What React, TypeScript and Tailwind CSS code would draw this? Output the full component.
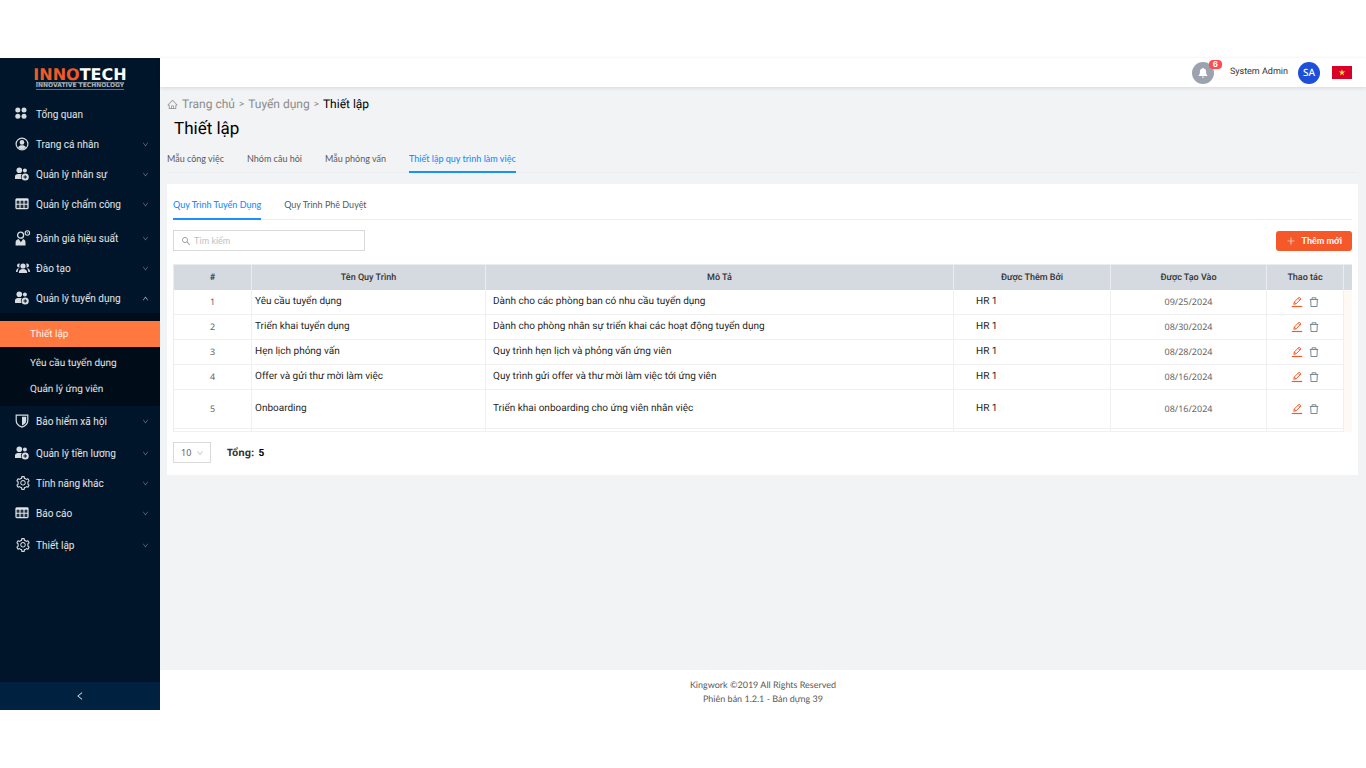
import type { ReactNode } from "react";
import clsx from "clsx";
import { AiOutlineDown, AiOutlineHome, AiOutlineLeft, AiOutlinePlus, AiOutlineSearch, AiOutlineSetting, AiOutlineUp } from "react-icons/ai";

function DotsIcon() {
  return (
    <svg viewBox="0 0 14 14" className="h-3.5 w-3.5" fill="currentColor" aria-hidden>
      <circle cx="2.8" cy="3" r="2.5" />
      <circle cx="9" cy="3" r="2.5" />
      <circle cx="2.8" cy="9.2" r="2.5" />
      <circle cx="9" cy="9.2" r="2.5" />
    </svg>
  );
}

function ProfileIcon() {
  return (
    <svg viewBox="0 0 14 14" className="h-3.5 w-3.5" fill="none" aria-hidden>
      <circle cx="7" cy="7" r="5.9" stroke="currentColor" strokeWidth="1.2" />
      <circle cx="7" cy="5.4" r="2.3" fill="currentColor" />
      <path d="M3 10.6C3.8 8.9 5.3 8.3 7 8.3s3.2.6 4 2.3C10 11.7 8.6 12.2 7 12.2S4 11.7 3 10.6z" fill="currentColor" />
    </svg>
  );
}

function PeoplePlusIcon() {
  return (
    <svg viewBox="0 0 14 14" className="h-3.5 w-3.5" fill="currentColor" aria-hidden>
      <circle cx="4.3" cy="3.2" r="2.8" />
      <circle cx="9.9" cy="3.6" r="2" />
      <path d="M0 11.5V9.5C0 7.8 1.3 6.9 3 6.9h3.8C6 7.9 5.7 9 5.9 10.2c.1.8.4 1.4.8 1.9H.6C.2 12.1 0 11.9 0 11.5z" />
      <path fillRule="evenodd" d="M10.2 6.4a3.6 3.6 0 1 1 0 7.2 3.6 3.6 0 0 1 0-7.2zM9.7 8.2v1.3H8.4v1h1.3v1.3h1v-1.3H12v-1h-1.300V8.2z" />
    </svg>
  );
}

function GridIcon() {
  return (
    <svg viewBox="0 0 14 14" className="h-3.5 w-3.5" aria-hidden>
      <rect x="1" y="2" width="12" height="9.6" rx=".8" fill="currentColor" fillOpacity=".15" stroke="currentColor" strokeWidth="1.3" />
      <path d="M1 3h12" stroke="currentColor" strokeWidth="1.4" />
      <path d="M5 2.5v9M9 2.5v9M1 7.3h12" stroke="currentColor" strokeWidth="1.1" />
    </svg>
  );
}

function ReviewIcon() {
  return (
    <svg viewBox="0 0 16 16" className="h-4 w-4" fill="none" aria-hidden>
      <circle cx="5.6" cy="5.2" r="3" stroke="currentColor" strokeWidth="1.3" />
      <path d="M.6 15.5v-3c0-1.9 1.200-3 3-3.400l2.300 3.200 2.200-3.200c1.500.4 2.400 1.500 2.400 3.400v3z" fill="currentColor" />
      <circle cx="12.4" cy="3" r="2.2" stroke="currentColor" strokeWidth="1.1" />
      <path d="M12.3 1.900v1.200h1" stroke="currentColor" strokeWidth=".7" />
    </svg>
  );
}

function GroupIcon() {
  return (
    <svg viewBox="0 0 16 14" className="h-3.5 w-4" fill="currentColor" aria-hidden>
      <circle cx="8" cy="5" r="2.6" />
      <path d="M3.800 12c0-2.600 1.500-3.900 4.200-3.900s4.200 1.300 4.200 3.900z" />
      <path d="M4.900 2.700A2 2 0 1 0 4.600 6.400 4 4 0 0 1 4.900 2.700zM11.100 2.700a2 2 0 1 1 .3 3.700 4 4 0 0 0-.3-3.700z" />
      <path d="M1 11c0-2.100.8-3.500 3-3.700-.9 1-1.300 2.200-1.400 3.700zM15 11c0-2.100-.8-3.500-3-3.700.9 1 1.300 2.200 1.400 3.700z" />
    </svg>
  );
}

function ShieldIcon() {
  return (
    <svg viewBox="0 0 14 14" className="h-3.5 w-3.5" aria-hidden>
      <path d="M1.200 1.200h11.600v5.300c0 3.400-2.200 5.400-5.800 6.600-3.600-1.200-5.800-3.200-5.800-6.600z" fill="none" stroke="currentColor" strokeWidth="1.2" />
      <path d="M7 2.800h4.200v3.900c0 2.200-1.400 3.600-4.200 4.700z" fill="currentColor" />
    </svg>
  );
}

function EditIcon() {
  return (
    <svg viewBox="0 0 12 12" className="h-3 w-3" fill="none" stroke="currentColor" aria-hidden>
      <path d="M2.800 8.300l.5-2.300 4.900-4.900 1.800 1.800-4.900 4.900zM7 2.300l1.800 1.800M3.300 6l1.800 1.800" strokeWidth="1" strokeLinejoin="round" />
      <path d="M.8 10.500h10.400" strokeWidth="1.2" />
    </svg>
  );
}

function TrashIcon() {
  return (
    <svg viewBox="0 0 10 12" className="h-3 w-2.5" fill="none" stroke="currentColor" aria-hidden>
      <path d="M.8 3.500h8.400M3 3.300V1.800h4v1.500M1.700 3.700l.3 6.800h6l.3-6.800" strokeWidth="1" strokeLinejoin="round" />
    </svg>
  );
}

type MenuEntry = {
  label: string;
  icon: ReactNode;
  leaf?: boolean;
  open?: boolean;
  spaced?: "sm" | "md";
};

const menuTop: MenuEntry[] = [
  { label: "Tổng quan", icon: <DotsIcon />, leaf: true },
  { label: "Trang cá nhân", icon: <ProfileIcon /> },
  { label: "Quản lý nhân sự", icon: <PeoplePlusIcon /> },
  { label: "Quản lý chấm công", icon: <GridIcon /> },
  { label: "Đánh giá hiệu suất", icon: <ReviewIcon />, spaced: "md" },
  { label: "Đào tạo", icon: <GroupIcon /> },
  { label: "Quản lý tuyển dụng", icon: <PeoplePlusIcon />, open: true },
];

const submenu = ["Thiết lập", "Yêu cầu tuyển dụng", "Quản lý ứng viên"];

const menuBottom: MenuEntry[] = [
  { label: "Bảo hiểm xã hội", icon: <ShieldIcon /> },
  { label: "Quản lý tiền lương", icon: <PeoplePlusIcon />, spaced: "sm" },
  { label: "Tính năng khác", icon: <AiOutlineSetting className="h-4 w-4" /> },
  { label: "Báo cáo", icon: <GridIcon /> },
  { label: "Thiết lập", icon: <AiOutlineSetting className="h-4 w-4" />, spaced: "sm" },
];

const pageTabs = ["Mẫu công việc", "Nhóm câu hỏi", "Mẫu phỏng vấn", "Thiết lập quy trình làm việc"];
const processTabs = ["Quy Trình Tuyển Dụng", "Quy Trình Phê Duyệt"];

const rows = [
  { name: "Yêu cầu tuyển dụng", desc: "Dành cho các phòng ban có nhu cầu tuyển dụng", by: "HR 1", date: "09/25/2024" },
  { name: "Triển khai tuyển dụng", desc: "Dành cho phòng nhân sự triển khai các hoạt động tuyển dụng", by: "HR 1", date: "08/30/2024" },
  { name: "Hẹn lịch phỏng vấn", desc: "Quy trình hẹn lịch và phỏng vấn ứng viên", by: "HR 1", date: "08/28/2024" },
  { name: "Offer và gửi thư mời làm việc", desc: "Quy trình gửi offer và thư mời làm việc tới ứng viên", by: "HR 1", date: "08/16/2024" },
  { name: "Onboarding", desc: "Triển khai onboarding cho ứng viên nhân việc", by: "HR 1", date: "08/16/2024" },
];

function MenuItem({ label, icon, leaf, open, spaced }: MenuEntry) {
  return (
    <button
      type="button"
      aria-expanded={leaf ? undefined : !!open}
      className={clsx(
        "flex h-[30px] w-full items-center pl-[15px] pr-[11px] text-left text-[10px] text-white/90",
        spaced === "sm" && "mt-0.5",
        spaced === "md" && "mt-1"
      )}
    >
      <span className="flex w-[21px] shrink-0 items-center text-white/85">{icon}</span>
      <span className="flex-1 whitespace-nowrap">{label}</span>
      {!leaf && (open ? <AiOutlineUp className="h-[7px] w-[7px] text-white/80" /> : <AiOutlineDown className="h-[7px] w-[7px] text-white/45" />)}
    </button>
  );
}

function Sidebar() {
  return (
    <aside className="flex w-40 shrink-0 flex-col bg-[#001529]">
      <div className="flex h-[41px] flex-col items-center pt-2.5">
        <div className="font-['DejaVu_Sans',sans-serif] text-[16px] font-bold leading-[14px] text-white">
          <span className="text-[#f05a28]">INNO</span>TECH
        </div>
        <div className="border-y border-white/40 font-['DejaVu_Sans',sans-serif] text-[6px] font-bold leading-[6px] text-white/70">
          INNOVATIVE TECHNOLOGY
        </div>
      </div>
      <nav aria-label="Menu">
        {menuTop.map((item) => (
          <MenuItem key={item.label} {...item} />
        ))}
        <div className="bg-[#000c17] pb-1 pt-2">
          {submenu.map((label, i) => (
            <a
              key={label}
              href="#"
              className={clsx(
                "flex h-[26px] items-center pl-[30px] text-[10px] text-white/90",
                i === 0 && "mb-[3px] bg-[#ff7840]"
              )}
            >
              {label}
            </a>
          ))}
        </div>
        {menuBottom.map((item) => (
          <MenuItem key={item.label} {...item} />
        ))}
      </nav>
      <button type="button" aria-label="Thu gọn menu" className="mt-auto flex h-7 items-center justify-center bg-[#002140] text-white/90">
        <AiOutlineLeft className="h-2.5 w-2.5" />
      </button>
    </aside>
  );
}

function TopBar() {
  return (
    <header className="z-10 flex h-[29px] shrink-0 items-center justify-end bg-white pr-3.5 shadow-[0_1px_4px_rgba(0,21,41,0.12)]">
      <button type="button" aria-label="Thông báo" className="relative flex h-[22px] w-[22px] items-center justify-center rounded-full bg-[#9ca3af] text-white">
        <svg viewBox="0 0 12 12" className="h-3 w-3" fill="currentColor" aria-hidden>
          <path d="M6 .8c.5 0 .8.3.8.8 1.500.4 2.300 1.500 2.300 3.100 0 1.900.4 2.700 1.200 3.600v.8H1.700v-.8C2.500 7.400 2.900 6.600 2.900 4.700c0-1.600.8-2.700 2.300-3.100 0-.5.3-.8.8-.8zM4.900 9.700h2.200a1.100 1.100 0 0 1-2.200 0z" />
        </svg>
        <span className="absolute -right-2 -top-0.5 flex h-[9px] w-[13px] items-center justify-center rounded-sm bg-[#ff4d4f] font-[Inter,sans-serif] text-[8px] font-bold leading-none">
          6
        </span>
      </button>
      <span className="ml-4 text-[9px] text-[#333]">System Admin</span>
      <span className="ml-2.5 flex h-[22px] w-[22px] items-center justify-center rounded-full bg-[#1d4fd8] font-['Noto_Sans',sans-serif] text-[10px] font-medium text-white">
        SA
      </span>
      <svg viewBox="0 0 20 13" className="ml-3 h-[13px] w-5" role="img" aria-label="Tiếng Việt">
        <rect width="20" height="13" fill="#d80027" />
        <path d="M10 3.300l.8 2.300h2.400l-2 1.500.8 2.300-2-1.400-2 1.400.8-2.300-2-1.500h2.400z" fill="#ffda44" />
      </svg>
    </header>
  );
}

function Tabs({ tabs, active, className }: { tabs: string[]; active: number; className: string }) {
  return (
    <div role="tablist" className={clsx("flex gap-[23px] border-b border-[#ebedf0] font-[Lato,'Noto_Sans',sans-serif] text-[9px]", className)}>
      {tabs.map((tab, i) => (
        <button
          key={tab}
          type="button"
          role="tab"
          aria-selected={i === active}
          className={clsx(
            "-mb-px whitespace-nowrap border-b-2 pt-0.5",
            i === active ? "border-[#1890ff] font-medium text-[#1890ff]" : "border-transparent text-[#595959]"
          )}
        >
          {tab}
        </button>
      ))}
    </div>
  );
}

const th = "h-[25px] border-r border-[#ebecef] bg-[#d5d9e0] font-medium text-[#333]";
const td = "border-b border-r border-[#f0f0f0]";

function ProcessTable() {
  return (
    <table className="mt-[13px] w-full table-fixed border-separate border-spacing-0 border-l border-t border-[#ebecef] text-[10px] leading-[14px]">
      <colgroup>
        <col className="w-[78px]" />
        <col className="w-[234px]" />
        <col />
        <col className="w-[157px]" />
        <col className="w-[156px]" />
        <col className="w-[77px]" />
        <col className="w-2" />
      </colgroup>
      <thead>
        <tr className="text-[9px]">
          <th className={th}>#</th>
          <th className={th}>Tên Quy Trình</th>
          <th className={th}>Mô Tả</th>
          <th className={th}>Được Thêm Bởi</th>
          <th className={th}>Được Tạo Vào</th>
          <th className={th}>Thao tác</th>
          <td className="bg-[#d5d9e0]" />
        </tr>
      </thead>
      <tbody className="text-[#1f1f1f]">
        {rows.map((row, i) => (
          <tr key={row.name} className={i === rows.length - 1 ? "h-[39px]" : "h-[25px]"}>
            <td className={clsx(td, "text-center font-['Noto_Sans',sans-serif] text-[9px] text-[#666]")}>{i + 1}</td>
            <td className={clsx(td, "pl-[3px]")}>{row.name}</td>
            <td className={clsx(td, "pl-[7px]")}>{row.desc}</td>
            <td className={clsx(td, "pl-[22px]")}>{row.by}</td>
            <td className={clsx(td, "text-center font-['Noto_Sans',sans-serif] text-[9px] text-[#666]")}>{row.date}</td>
            <td className={td}>
              <div className="flex items-center justify-center gap-1.5">
                <button type="button" aria-label={`Sửa ${row.name}`} className="text-[#f5592a]">
                  <EditIcon />
                </button>
                <button type="button" aria-label={`Xóa ${row.name}`} className="text-[#7d8694]">
                  <TrashIcon />
                </button>
              </div>
            </td>
            <td className="bg-[#fff9f5]" />
          </tr>
        ))}
        <tr className="h-[3px]">
          {[0, 1, 2, 3, 4, 5].map((n) => (
            <td key={n} className={td} />
          ))}
          <td className="bg-[#fff9f5]" />
        </tr>
      </tbody>
    </table>
  );
}

export default function App() {
  return (
    <div className="flex min-h-screen bg-white py-[58px] font-[Roboto,sans-serif] [text-rendering:geometricPrecision]">
      <Sidebar />
      <div className="flex min-w-0 flex-1 flex-col bg-[#f2f3f5]">
        <TopBar />
        <main className="flex-1 pb-4 pl-[7px] pr-2 pt-[9px]">
          <nav aria-label="Breadcrumb" className="flex h-4 items-center text-[12px] text-[#8c8c8c]">
            <AiOutlineHome className="h-[11px] w-[11px]" />
            <a href="#" className="ml-1">Trang chủ</a>
            <span className="mx-1 text-[10px]">&gt;</span>
            <a href="#">Tuyển dụng</a>
            <span className="mx-1 text-[10px]">&gt;</span>
            <span className="text-black">Thiết lập</span>
          </nav>
          <h1 className="ml-[7px] mt-[5px] text-[17px] leading-6 text-black">Thiết lập</h1>
          <Tabs tabs={pageTabs} active={3} className="mt-1 h-[28px]" />

          <section className="mt-[11px] bg-white px-1.5 pb-3 pt-1.5">
            <Tabs tabs={processTabs} active={0} className="h-[30px]" />
            <div className="mt-2.5 flex items-center justify-between">
              <div className="flex h-[21px] w-48 items-center gap-[3px] border border-[#d9d9d9] px-[7px] text-[#8c8c8c]">
                <AiOutlineSearch className="h-2.5 w-2.5 shrink-0" />
                <input
                  type="text"
                  aria-label="Tìm kiếm"
                  placeholder="Tìm kiếm"
                  className="h-full w-full min-w-0 font-[Lato,'Noto_Sans',sans-serif] text-[9px] outline-none placeholder:text-[#bfbfbf]"
                />
              </div>
              <button type="button" className="flex h-5 items-center gap-1.5 rounded-[3px] bg-[#f5592a] px-2.5 font-[Lato,'Noto_Sans',sans-serif] text-[9px] font-bold text-white">
                <AiOutlinePlus className="h-2.5 w-2.5" />
                Thêm mới
              </button>
            </div>
            <ProcessTable />
            <div className="mt-2.5 flex items-center gap-4">
              <div className="relative flex">
                <select
                  aria-label="Số dòng mỗi trang"
                  defaultValue="10"
                  className="h-[21px] w-[38px] appearance-none border border-[#d9d9d9] bg-white pl-[7px] font-['Noto_Sans',sans-serif] text-[9px] text-[#666]"
                >
                  <option>10</option>
                  <option>20</option>
                  <option>50</option>
                </select>
                <AiOutlineDown className="pointer-events-none absolute right-[7px] top-[7px] h-2 w-2 text-[#bfbfbf]" />
              </div>
              <span className="font-['Noto_Sans',sans-serif] text-[10px] font-bold text-[#333]">
                Tổng: <span className="ml-0.5 font-[Roboto,sans-serif] text-black">5</span>
              </span>
            </div>
          </section>
        </main>
        <footer className="flex h-10 shrink-0 flex-col items-center justify-center bg-white pt-1 font-[Lato,'Noto_Sans',sans-serif] text-[9px] leading-[14px] text-[#595959]">
          <p>Kingwork ©2019 All Rights Reserved</p>
          <p>Phiên bản 1.2.1 - Bản dựng 39</p>
        </footer>
      </div>
    </div>
  );
}
